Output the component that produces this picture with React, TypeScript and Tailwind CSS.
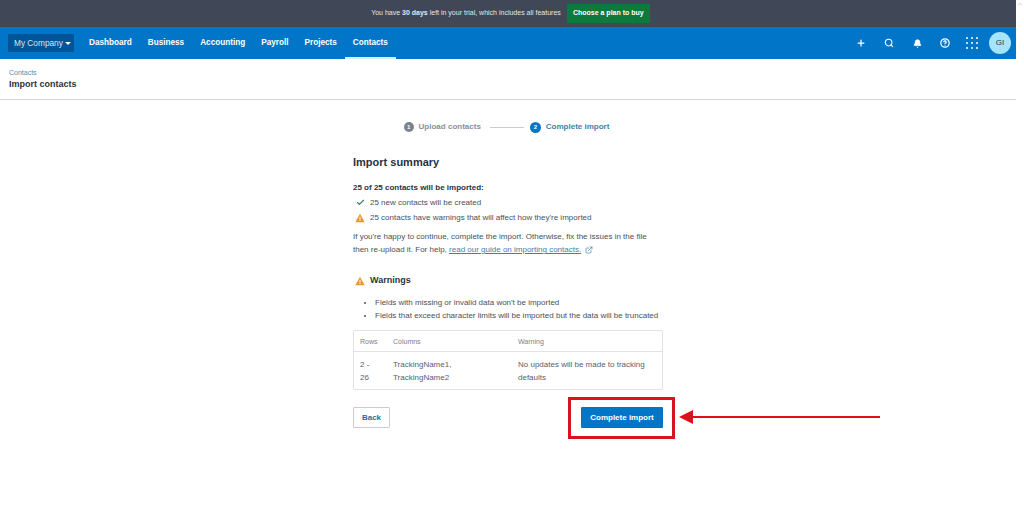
import { Bell, Check, ChevronUp, CircleHelp, ExternalLink, Plus, Search } from "lucide-react";

const navItems = ["Dashboard", "Business", "Accounting", "Payroll", "Projects"];

const Warn = () => (
  <svg viewBox="0 0 12 11" className="ml-[2px] w-[10px] h-[10px] shrink-0">
    <path d="M6 0.5 L11.6 10.5 L0.4 10.5 Z" fill="#e8962e" />
    <rect x="5.4" y="4" width="1.2" height="3.4" fill="#fff" />
    <rect x="5.4" y="8" width="1.2" height="1.2" fill="#fff" />
  </svg>
);

const Grid = () => (
  <svg viewBox="0 0 12 12" className="w-[12px] h-[12px]" fill="#fff">
    {[1, 6, 11].map((y) =>
      [1, 6, 11].map((x) => <circle key={`${x}-${y}`} cx={x} cy={y} r="1" />)
    )}
  </svg>
);

export default function App() {
  return (
    <div className="relative w-[1024px] h-[505px] overflow-hidden bg-white flex font-['Liberation_Sans',Arial,sans-serif] text-[#2a3240]">
      <div className="w-[1016px] shrink-0">
        {/* trial bar */}
        <div className="h-[27px] bg-[#404756] flex items-center justify-center gap-[6px] pl-[5px] text-[7px] text-[#e4e6ea]">
          <span>
            You have <b>30 days</b> left in your trial, which includes all features
          </span>
          <span className="h-[19px] w-[83px] bg-[#0b7a3b] rounded-[1px] flex items-center justify-center text-white font-bold">
            Choose a plan to buy
          </span>
        </div>

        {/* nav */}
        <div className="h-[32px] bg-[#0175c8] flex items-center pl-[8px] pr-[5px] text-white">
          <div className="h-[18px] w-[66px] bg-[#015596] rounded-[1px] flex items-center pl-[6px] gap-[2px] text-[8.3px] text-[#d5e6f3]">
            My Company
            <span className="w-0 h-0 border-x-[3px] border-x-transparent border-t-[3px] border-t-white" />
          </div>
          <div className="ml-[7px] flex h-full text-[8.2px] font-bold">
            {navItems.map((n) => (
              <div key={n} className="px-[8px] flex items-center">{n}</div>
            ))}
            <div className="px-[8px] flex items-center border-b-2 border-[#d8eef9] pt-[2px]">Contacts</div>
          </div>
          <div className="ml-auto flex items-center">
            <Plus size={10} strokeWidth={3} className="mr-[18px]" />
            <Search size={10} strokeWidth={2.5} className="mr-[19px]" />
            <Bell size={9} fill="#fff" className="mr-[18px]" />
            <CircleHelp size={10} strokeWidth={3} className="mr-[16px]" />
            <div className="mr-[11px]"><Grid /></div>
            <div className="w-[22px] h-[22px] rounded-full bg-[#a6e4fb] flex items-center justify-center text-[8px] text-[#2a3240]">
              GI
            </div>
          </div>
        </div>

        {/* page header */}
        <div className="h-[41px] border-b border-[#d5d7db] pl-[9px] pt-[9px]">
          <div className="text-[7px] leading-[9px] text-[#4f8fb5]">Contacts</div>
          <div className="mt-[1px] text-[9px] leading-[12px] font-bold">Import contacts</div>
        </div>

        {/* stepper */}
        <div className="mt-[21px] pr-[3px] flex items-center justify-center text-[8px] font-bold">
          <span className="w-[10px] h-[10px] rounded-full bg-[#7d8290] text-white text-[6px] flex items-center justify-center">1</span>
          <span className="ml-[5px] text-[#8b8f99]">Upload contacts</span>
          <span className="ml-[9px] mr-[6px] w-[34px] h-px bg-[#c9ccd1]" />
          <span className="w-[11px] h-[11px] rounded-full bg-[#0175c8] text-white text-[6px] flex items-center justify-center">2</span>
          <span className="ml-[5px] text-[#3f7fa8]">Complete import</span>
        </div>

        {/* content */}
        <div className="mx-auto mt-[22px] w-[310px] text-[8px] leading-[13px]">
          <h1 className="text-[11px] leading-[14px] font-bold">Import summary</h1>
          <p className="mt-[12px] font-bold">25 of 25 contacts will be imported:</p>
          <div className="mt-[1px] flex items-center h-[15px] text-[#4a505c]">
            <Check size={9} strokeWidth={3} className="ml-[3px] text-[#2f7d5b]" />
            <span className="ml-[5px]">25 new contacts will be created</span>
          </div>
          <div className="flex items-center h-[15px] text-[#4a505c]">
            <Warn />
            <span className="ml-[5px]">25 contacts have warnings that will affect how they're imported</span>
          </div>
          <p className="mt-[5px] text-[#4a505c]">
            If you're happy to continue, complete the import. Otherwise, fix the issues in the file<br />
            then re-upload it. For help, <span className="underline text-[#3f7fa8]">read our guide on importing contacts.</span>
            <ExternalLink size={8} className="inline ml-[4px] text-[#3f7fa8]" />
          </p>

          <div className="mt-[18px] flex items-center">
            <Warn />
            <h2 className="ml-[5px] text-[9px] font-bold">Warnings</h2>
          </div>
          <ul className="mt-[9px] pl-[22px] list-disc text-[#4a505c]">
            <li>Fields with missing or invalid data won't be imported</li>
            <li>Fields that exceed character limits will be imported but the data will be truncated</li>
          </ul>

          <div className="mt-[8px] border border-[#e1e3e6] rounded-[1px] text-[#5a606b]">
            <div className="h-[21px] flex items-center border-b border-[#e1e3e6] pl-[6px] text-[7px] text-[#7b808a]">
              <span className="w-[33px]">Rows</span>
              <span className="w-[125px]">Columns</span>
              <span>Warning</span>
            </div>
            <div className="h-[37px] flex items-center pl-[6px]">
              <span className="w-[33px]">2 -<br />26</span>
              <span className="w-[125px]">TrackingName1,<br />TrackingName2</span>
              <span className="w-[140px]">No updates will be made to tracking defaults</span>
            </div>
          </div>

          <div className="mt-[17px] flex items-center justify-between">
            <button className="h-[21px] w-[37px] border border-[#c9ccd1] rounded-[1px] text-[8px] font-bold text-[#1f6f9f]">Back</button>
            <button className="h-[21px] w-[82px] bg-[#0175c8] rounded-[1px] text-[8px] font-bold text-white">Complete import</button>
          </div>
        </div>
      </div>

      {/* scrollbar */}
      <div className="flex-1 flex justify-center pt-[1px]">
        <ChevronUp size={6} className="text-[#9a9a9a]" />
      </div>

      {/* annotation */}
      <div className="absolute left-[568px] top-[397px] w-[107px] h-[42px] border-[3px] border-[#d8131b]" />
      <svg className="absolute left-[678px] top-[408px]" width="204" height="18" viewBox="0 0 204 18">
        <path d="M1 9 L15 2 L15 16 Z" fill="#e0101a" />
        <rect x="14" y="8" width="188" height="2" fill="#e0101a" />
      </svg>
    </div>
  );
}
